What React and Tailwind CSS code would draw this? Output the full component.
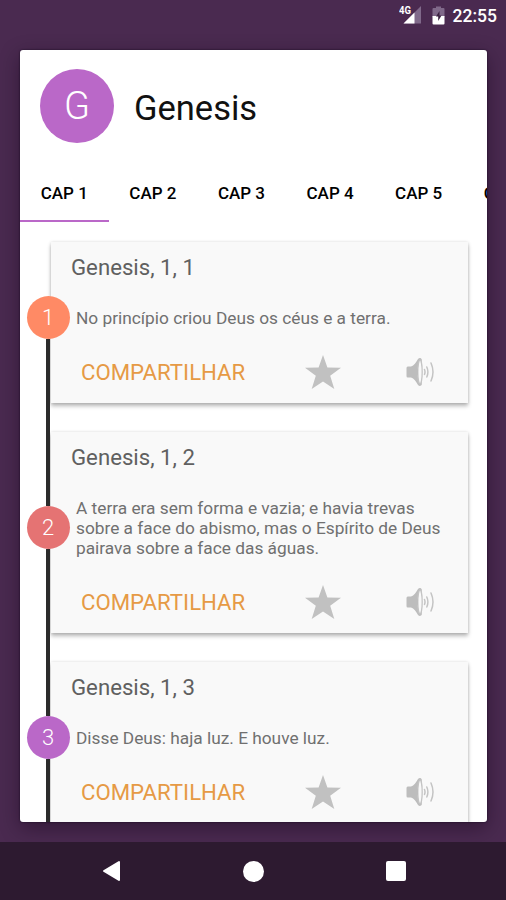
import React, { useState } from 'react'

const tabs = ['CAP 1', 'CAP 2', 'CAP 3', 'CAP 4', 'CAP 5', 'CAP 6']

const verses = [
  { id: 1, color: 'bg-[#ff8a65]', lines: ['No princípio criou Deus os céus e a terra.'] },
  {
    id: 2,
    color: 'bg-[#e57373]',
    lines: [
      'A terra era sem forma e vazia; e havia trevas',
      'sobre a face do abismo, mas o Espírito de Deus',
      'pairava sobre a face das águas.'
    ]
  },
  { id: 3, color: 'bg-[#ba68c8]', lines: ['Disse Deus: haja luz. E houve luz.'] }
]

const StarIcon = () => (
  <svg width="36" height="34" viewBox="0 0 36 34" fill="#c1c1c1">
    <path d="M18 0l4.400 12.400 13.600.3-10.800 8.100L29.300 34 18 26.600 6.700 34l4.100-13.200L0 12.700l13.600-.3z" />
  </svg>
)

const SpeakerIcon = () => (
  <svg width="28" height="30" viewBox="0 0 28 30" fill="none">
    <path d="M1.800 9.500H5c3-1 5-4 7-7.500 1.500-1.500 3-1.200 3.800.5v25c-.8 1.700-2.300 2-3.800.5-2-3.500-4-6.500-7-7.500H1.800Q.5 20.500.5 19v-8q0-1.500 1.300-1.500z" fill="#bdbdbd" />
    <ellipse cx="14" cy="15" rx="2.200" ry="12" fill="#f8f8f8" stroke="#c4c4c4" strokeWidth="1.300" />
    <path d="M12 11c-1.500 2-1.500 6 0 8z" fill="#bdbdbd" />
    <path d="M18.500 12.500q1 2.500 0 5M20.800 10q2.200 5 0 10M25 6q4 9 0 18" stroke="#c4c4c4" strokeWidth="1.500" strokeLinecap="round" />
  </svg>
)

const StatusBar = () => (
  <div className="h-[50px] shrink-0 flex items-start justify-end pr-[9px] text-white">
    <svg width="23" height="20" viewBox="0 0 23 20" className="mt-[5px] mr-[10px]">
      <path d="M22 1v17.500H4.500z" fill="#80698a" />
      <path d="M15.500 7.500v11h-11z" fill="#fff" />
      <text x="0" y="9" fontSize="10" fontWeight="700" fill="#fff" fontFamily="Roboto" textLength="12" lengthAdjust="spacingAndGlyphs">4G</text>
    </svg>
    <svg width="13" height="20" viewBox="0 0 13 20" className="mt-[6px] mr-[8px]">
      <path d="M4 .5h5v1.500h2.500q1 0 1 1V11H.5V3q0-1 1-1H4z" fill="#80698a" />
      <path d="M.5 10h12v7.500q0 1-1 1h-10q-1 0-1-1z" fill="#fff" />
      <path d="M7.500 5L4 10.500h2.200v4.500L9.500 9.500H7.500z" fill="#3a2040" />
    </svg>
    <span className="text-[17.5px] leading-[20px] mt-[6px] font-medium">22:55</span>
  </div>
)

const Verse = ({ verse, first }) => (
  <div className="flex shrink-0">
    <div className="w-[43px] ml-[6.500px] mr-[-18.500px] z-10 flex flex-col items-center">
      <div className={`w-1 flex-1 ${first ? '' : 'bg-[#2b2b2b]'}`} />
      <div className={`size-[43px] shrink-0 rounded-full flex items-center justify-center text-white text-[22px] font-light ${verse.color}`}>
        {verse.id}
      </div>
      <div className="w-1 flex-1 bg-[#2b2b2b]" />
    </div>
    <div className="w-[417px] mt-5 mb-[9px] bg-[#f9f9f9] text-[#606060] shadow-[0_3px_4px_rgba(0,0,0,0.28),0_0_3px_rgba(0,0,0,0.13)]">
      <h2 className="pl-5 pt-[11px] text-[22.2px] leading-[28px]">Genesis, 1, {verse.id}</h2>
      <p className="pl-[25px] pt-[27px] text-[17.300px] leading-[20px] text-[#707070]">
        {verse.lines.map(line => (
          <span key={line} className="block whitespace-nowrap">{line}</span>
        ))}
      </p>
      <div className="flex items-center h-[44px] mt-[22px] mb-[9px]">
        <button className="w-[166px] ml-[30px] pt-[2px] text-left text-[22.200px] text-[#e69a45]">COMPARTILHAR</button>
        <button className="ml-[58px] -mt-px"><StarIcon /></button>
        <button className="ml-[65px]"><SpeakerIcon /></button>
      </div>
    </div>
  </div>
)

const App = () => {
  const [active, setActive] = useState(0)

  return (
    <div className="w-[506px] h-[900px] flex flex-col overflow-hidden bg-[#4a2a50] font-[Roboto,sans-serif]">
      <StatusBar />

      {/* Book dialog */}
      <div className="ml-5 w-[467px] h-[771.5px] shrink-0 flex flex-col overflow-hidden rounded-[3px] bg-white shadow-[0_0_2px_#160b20,0_6px_20px_rgba(20,5,25,0.45)]">
        <header className="h-[112px] shrink-0 flex items-start pl-5 pt-[19px]">
          <div className="size-[74px] rounded-full bg-[#ba68c8] flex items-center justify-center text-white text-[38px] font-light">
            G
          </div>
          <h1 className="ml-5 mt-[15px] text-[34.500px] leading-[48px] text-[#111]">Genesis</h1>
        </header>

        <nav className="flex h-[60px] shrink-0">
          {tabs.map((tab, i) => (
            <button
              key={tab}
              onClick={() => setActive(i)}
              className={`w-[88.6px] shrink-0 pt-[6px] text-[17px] font-medium text-black border-b-2 ${i === active ? 'border-[#ba68c8]' : 'border-transparent'}`}
            >
              {tab}
            </button>
          ))}
        </nav>

        <main className="flex-1 min-h-0 overflow-hidden flex flex-col">
          {verses.map((verse, i) => (
            <Verse key={verse.id} verse={verse} first={i === 0} />
          ))}
        </main>
      </div>

      {/* Navigation bar */}
      <div className="mt-[20.5px] h-[58px] shrink-0 bg-[#2d1a30] flex items-center justify-center">
        <svg width="22" height="24" viewBox="0 0 22 24">
          <path d="M18 3v18L3 12z" fill="#fff" stroke="#fff" strokeWidth="2" strokeLinejoin="round" />
        </svg>
        <div className="size-[21px] rounded-full bg-white ml-[120px] mr-[122px]" />
        <div className="size-[20px] rounded-[2px] bg-white" />
      </div>
    </div>
  )
}

export default App
